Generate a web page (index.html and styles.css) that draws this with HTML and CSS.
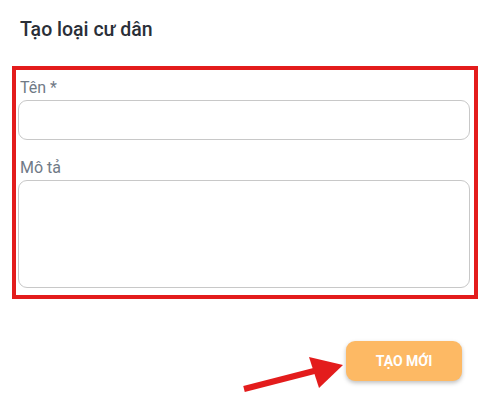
FILE: index.html
```html
<!DOCTYPE html>
<html lang="vi">
<head>
<meta charset="utf-8">
<link rel="stylesheet" href="styles.css">
</head>
<body>
<div class="dialog">
  <h2 class="title">Tạo loại cư dân</h2>
  <div class="frame">
    <label class="label">Tên *</label>
    <div class="input"></div>
    <label class="label label-2">Mô tả</label>
    <div class="textarea"></div>
  </div>
  <div class="actions">
    <button class="btn">TẠO MỚI</button>
  </div>
  <svg class="arrow" width="489" height="408" viewBox="0 0 489 408">
    <line x1="244" y1="389" x2="318" y2="370" stroke="#e31c1c" stroke-width="6"/>
    <polygon points="343,365 309,357 319,388" fill="#e31c1c"/>
  </svg>
</div>
</body>
</html>
```

FILE: styles.css
```css
html, body {
  margin: 0;
  padding: 0;
  background: #ffffff;
}
body {
  font-family: Roboto, "Noto Sans", Arial, sans-serif;
  width: 489px;
  height: 408px;
  overflow: hidden;
}
.dialog {
  position: relative;
  width: 489px;
  height: 408px;
}
.title {
  margin: 0;
  padding: 18px 0 0 20px;
  font-size: 19.5px;
  line-height: 24px;
  font-weight: 500;
  color: #2a2f38;
}
.frame {
  margin: 24px 11px 0 12px;
  border: 4px solid #e31c1c;
  padding: 8px 4px 7px 2px;
  display: flex;
  flex-direction: column;
}
.label {
  display: block;
  font-size: 16px;
  line-height: 20px;
  color: #707a86;
  padding-left: 2px;
  margin-bottom: 2px;
}
.label-2 {
  margin-top: 18px;
}
.input, .textarea {
  box-sizing: border-box;
  border: 1px solid #c8c8c8;
  border-radius: 9px;
  background: #fff;
}
.input {
  height: 40px;
}
.textarea {
  height: 108px;
}
.actions {
  display: flex;
  justify-content: flex-end;
  padding: 42px 27px 0 0;
}
.btn {
  width: 116px;
  height: 40px;
  border: none;
  border-radius: 9px;
  background: #fdb964;
  color: #ffffff;
  font-family: Roboto, Arial, sans-serif;
  font-size: 14px;
  font-weight: 700;
  box-shadow: 0 2px 4px rgba(0,0,0,0.25);
}
.arrow {
  position: absolute;
  left: 0;
  top: 0;
  pointer-events: none;
}
```
